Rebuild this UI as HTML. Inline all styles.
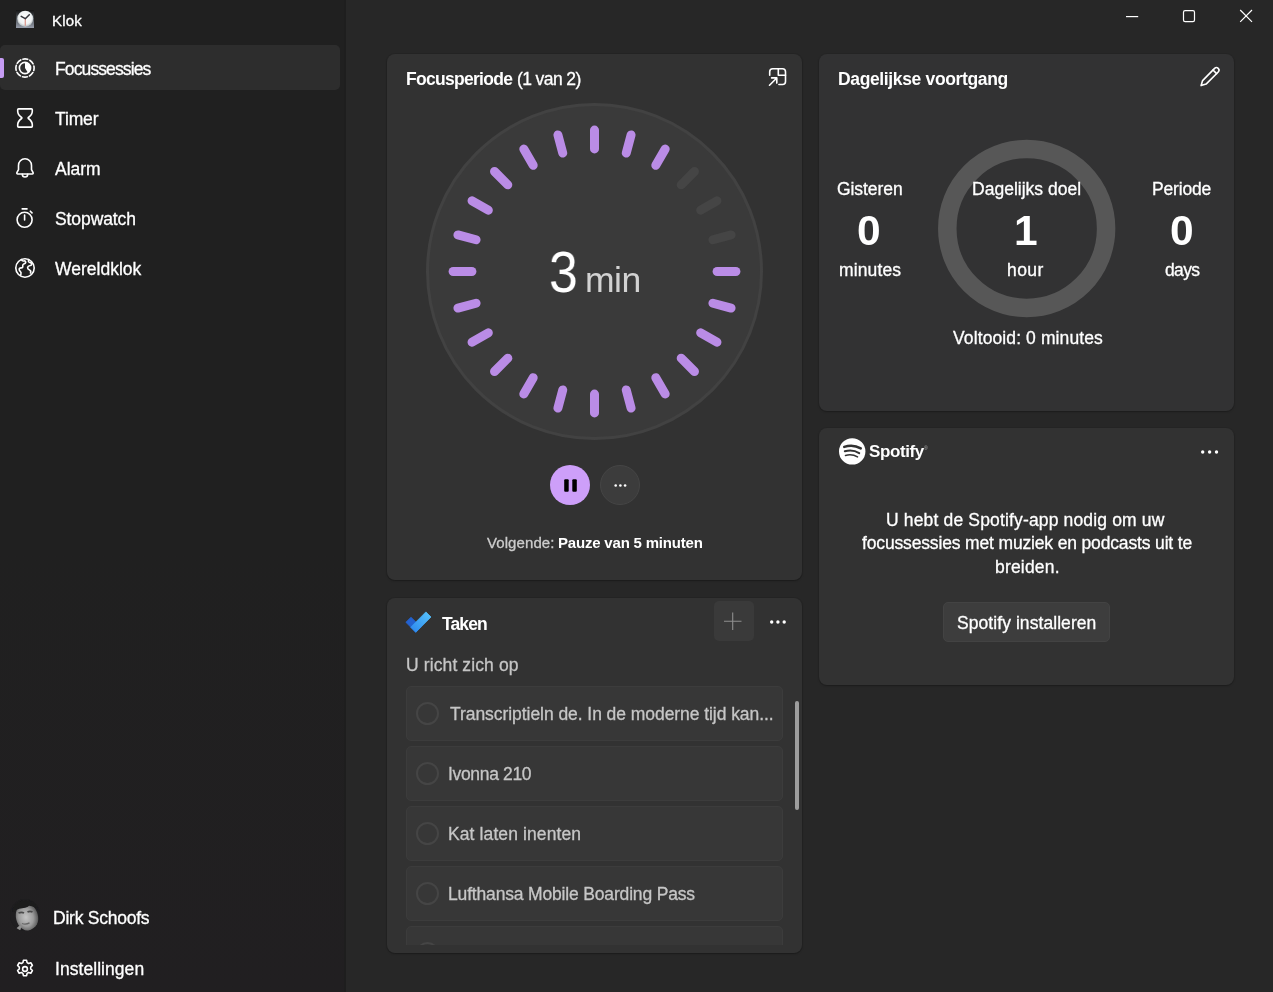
<!DOCTYPE html>
<html lang="nl">
<head>
<meta charset="utf-8">
<title>Klok</title>
<style>
*{box-sizing:border-box;margin:0;padding:0}
html,body{width:1273px;height:992px;overflow:hidden}
body{position:relative;background:#272727;font-family:"Liberation Sans",sans-serif;color:#fff}
.abs{position:absolute}
.tx{position:absolute;line-height:1;white-space:pre;will-change:transform;-webkit-text-stroke:.3px currentColor}
#side{position:absolute;left:0;top:0;width:345px;height:992px;background:linear-gradient(180deg,#202020 0%,#202020 55%,#211f21 100%)}
#edge{position:absolute;left:344px;top:0;width:2px;height:992px;background:#1e1e1e}
#main{position:absolute;left:345px;top:0;width:928px;height:992px;background:#272727}
#sel{position:absolute;left:0;top:45px;width:340px;height:45px;border-radius:5px;background:#2d2d2d}
#pill{position:absolute;left:0;top:58px;width:4px;height:20px;border-radius:0 2px 2px 0;background:#c69cf4}
.card{position:absolute;background:#323232;border-radius:8px;box-shadow:0 1px 2px rgba(0,0,0,.28),0 0 0 1px rgba(0,0,0,.06)}
#c_focus{left:387px;top:54px;width:414.5px;height:526px}
#c_tasks{left:387px;top:598px;width:414.5px;height:355px;overflow:hidden}
#c_daily{left:819px;top:54px;width:414.5px;height:357px;background:#323233}
#c_spot{left:819px;top:428px;width:414.5px;height:257px}
svg{position:absolute;overflow:visible}
.ic{fill:none;stroke:#fff;stroke-width:1.6;stroke-linecap:round;stroke-linejoin:round}
.task{position:absolute;left:406px;width:377px;height:55px;border-radius:5px;background:#373737;border:1px solid #3c3c3c}
.radio{position:absolute;left:9px;top:15px;width:23px;height:23px;border-radius:50%;border:2px solid #454545}
#list{position:absolute;left:0;top:0;width:1273px;height:945px;overflow:hidden}
#scroll{position:absolute;left:795px;top:701px;width:4px;height:109px;border-radius:2px;background:#9d9d9d}
#plus{position:absolute;left:714px;top:601px;width:40px;height:40px;border-radius:5px;background:#3a3a3a}
#spbtn{position:absolute;left:943px;top:602px;width:167px;height:40px;border-radius:5px;background:#3d3d3d;border:1px solid #434343}
#pause{position:absolute;left:550px;top:465px;width:40px;height:40px;border-radius:50%;background:#cd9ff9}
#more{position:absolute;left:600px;top:465px;width:40px;height:40px;border-radius:50%;background:#3c3c3c;border:1px solid #454545}
#avatar{position:absolute;left:10px;top:899px;width:30px;height:32px;border-radius:50%;overflow:hidden;background:#1c1c1c}
#t_klok{left:52.4px;top:13.0px;font-size:15px;font-weight:400;color:#ffffff;letter-spacing:0.200px}
#t_focus{left:54.8px;top:61.0px;font-size:17.5px;font-weight:400;color:#ffffff;letter-spacing:-0.882px}
#t_timer{left:55.3px;top:111.0px;font-size:17.5px;font-weight:400;color:#ffffff;letter-spacing:-0.150px}
#t_alarm{left:55.3px;top:161.0px;font-size:17.5px;font-weight:400;color:#ffffff;letter-spacing:-0.025px}
#t_stop{left:54.8px;top:211.0px;font-size:17.5px;font-weight:400;color:#ffffff;letter-spacing:-0.088px}
#t_world{left:55.3px;top:261.0px;font-size:17.5px;font-weight:400;color:#ffffff;letter-spacing:0.011px}
#t_user{left:52.9px;top:910.0px;font-size:17.5px;font-weight:400;color:#ffffff;letter-spacing:-0.236px}
#t_set{left:55.2px;top:961.0px;font-size:17.5px;font-weight:400;color:#ffffff;letter-spacing:0.055px}
#t_fp{left:405.8px;top:71.0px;font-size:17.5px;font-weight:700;color:#ffffff;-webkit-text-stroke:0;letter-spacing:-0.709px}
#t_fp2{left:516.9px;top:71.0px;font-size:17.5px;font-weight:400;color:#ffffff;letter-spacing:-0.600px}
#t_dv{left:837.5px;top:71.0px;font-size:17.5px;font-weight:700;color:#ffffff;-webkit-text-stroke:0;letter-spacing:-0.358px}
#t_3{left:548.9px;top:244.0px;font-size:57.5px;font-weight:400;color:#ffffff;-webkit-text-stroke:0;letter-spacing:0.000px}
#t_min{left:584.7px;top:263.0px;font-size:35.5px;font-weight:400;color:#d2d2d2;-webkit-text-stroke:0;letter-spacing:-0.450px}
#t_volg{left:487.3px;top:535.0px;font-size:15px;font-weight:400;color:#cccccc;letter-spacing:0.088px}
#t_pauze{left:557.8px;top:535.0px;font-size:15px;font-weight:700;color:#ffffff;-webkit-text-stroke:0;letter-spacing:-0.194px}
#t_taken{left:441.7px;top:616.0px;font-size:17.5px;font-weight:700;color:#ffffff;-webkit-text-stroke:0;letter-spacing:-0.900px}
#t_richt{left:405.6px;top:657.0px;font-size:17.5px;font-weight:400;color:#c5c5c5;letter-spacing:0.114px}
#t_gis{left:837.1px;top:181.0px;font-size:17.5px;font-weight:400;color:#ffffff;letter-spacing:-0.071px}
#t_0a{left:856.9px;top:210.0px;font-size:42.5px;font-weight:700;color:#ffffff;-webkit-text-stroke:0;letter-spacing:0.000px}
#t_mina{left:838.7px;top:262.0px;font-size:17.5px;font-weight:400;color:#ffffff;letter-spacing:0.117px}
#t_dd{left:971.8px;top:181.0px;font-size:17.5px;font-weight:400;color:#ffffff;letter-spacing:0.015px}
#t_1{left:1013.8px;top:210.0px;font-size:42.5px;font-weight:700;color:#ffffff;-webkit-text-stroke:0;letter-spacing:0.000px}
#t_hour{left:1007.4px;top:262.0px;font-size:17.5px;font-weight:400;color:#ffffff;letter-spacing:0.400px}
#t_per{left:1152.3px;top:181.0px;font-size:17.5px;font-weight:400;color:#ffffff;letter-spacing:-0.167px}
#t_0b{left:1169.8px;top:210.0px;font-size:42.5px;font-weight:700;color:#ffffff;-webkit-text-stroke:0;letter-spacing:0.000px}
#t_days{left:1164.6px;top:262.0px;font-size:17.5px;font-weight:400;color:#ffffff;letter-spacing:-0.633px}
#t_volt{left:952.6px;top:330.0px;font-size:17.5px;font-weight:400;color:#ffffff;letter-spacing:0.111px}
#t_spot{left:868.5px;top:443.0px;font-size:17px;font-weight:700;color:#ffffff;-webkit-text-stroke:0;letter-spacing:-0.400px}
#t_sp1{left:886.3px;top:512.0px;font-size:17.5px;font-weight:400;color:#ffffff;letter-spacing:0.156px}
#t_sp2{left:861.9px;top:535.0px;font-size:17.5px;font-weight:400;color:#ffffff;letter-spacing:-0.154px}
#t_sp3{left:994.6px;top:559.0px;font-size:17.5px;font-weight:400;color:#ffffff;letter-spacing:0.186px}
#t_spb{left:957.3px;top:615.0px;font-size:17.5px;font-weight:400;color:#ffffff;letter-spacing:0.067px}
#t_k1{left:449.8px;top:706.0px;font-size:17.5px;font-weight:400;color:#c6c6c6;letter-spacing:-0.058px}
#t_k2{left:448.3px;top:766.0px;font-size:17.5px;font-weight:400;color:#c6c6c6;letter-spacing:-0.333px}
#t_k3{left:448.1px;top:826.0px;font-size:17.5px;font-weight:400;color:#c6c6c6;letter-spacing:0.106px}
#t_k4{left:448.1px;top:886.0px;font-size:17.5px;font-weight:400;color:#c6c6c6;letter-spacing:-0.169px}
#t_3{transform:scaleX(.9);transform-origin:0 0}
</style>
</head>
<body>
<div id="side"></div>
<div id="main"></div>
<div id="edge"></div>

<!-- title bar -->
<svg id="appicon" style="left:16px;top:10px" width="18" height="18" viewBox="0 0 18 18">
  <defs>
    <linearGradient id="ag" x1="0" y1="0" x2="0" y2="1"><stop offset="0" stop-color="#141414"/><stop offset=".45" stop-color="#4a4f55"/><stop offset="1" stop-color="#979daa"/></linearGradient>
    <radialGradient id="af" cx=".5" cy=".45" r=".5"><stop offset="0" stop-color="#ffffff"/><stop offset=".8" stop-color="#eef1f2"/><stop offset="1" stop-color="#c3cacc"/></radialGradient>
  </defs>
  <rect width="18" height="18" fill="url(#ag)"/>
  <circle cx="9.200" cy="8.700" r="8" fill="url(#af)"/>
  <path d="M9.300 8.700v6.600" stroke="#dc9a90" stroke-width="1.300" stroke-linecap="round"/>
  <path d="M5.200 6.400l4.100 2.300 4-4" stroke="#33343a" stroke-width="1.500" stroke-linecap="round" stroke-linejoin="round" fill="none"/>
</svg>
<span class="tx" id="t_klok">Klok</span>
<svg style="left:1120px;top:4px" width="150" height="26" viewBox="1120 4 150 26">
  <path d="M1126 16.6h12.2" stroke="#fff" stroke-width="1.2" fill="none"/>
  <rect x="1183.5" y="10.6" width="11" height="11" rx="1.6" stroke="#fff" stroke-width="1.2" fill="none"/>
  <path d="M1240.2 10l11.8 11.8M1252 10l-11.8 11.8" stroke="#fff" stroke-width="1.2" fill="none"/>
</svg>

<!-- navigation -->
<div id="sel"></div><div id="pill"></div>
<svg style="left:15px;top:58px" width="20" height="20" viewBox="0 0 20 20">
  <circle cx="10" cy="10" r="9.1" class="ic" stroke-dasharray="4.950 2.200" stroke-linecap="butt" stroke-dashoffset="2.480"/>
  <circle cx="10" cy="10" r="5.6" class="ic"/>
  <path d="M10 10V4.4A5.6 5.6 0 0 1 12.9 14.8z" fill="#fff"/>
</svg>
<span class="tx" id="t_focus">Focussessies</span>

<svg style="left:15px;top:108px" width="20" height="20" viewBox="0 0 20 20">
  <path class="ic" d="M3.6 0.9h12.8c.5 0 .9.4.9.9v1.4c0 2.6-1.6 4.6-3.9 6.3-.4.3-.4.7 0 1 2.300 1.700 3.900 3.700 3.900 6.300v1.400c0 .5-.4.900-.9.900H3.600c-.5 0-.9-.4-.9-.9v-1.400c0-2.600 1.600-4.600 3.900-6.300.4-.3.4-.7 0-1C4.300 7.800 2.700 5.800 2.700 3.200V1.800c0-.5.4-.9.900-.9z"/>
</svg>
<span class="tx" id="t_timer">Timer</span>

<svg style="left:15px;top:158px" width="20" height="20" viewBox="0 0 20 20">
  <path class="ic" d="M10 0.8c-3.700 0-6.500 2.900-6.500 6.600v4.200L1.900 14.700c-.3.600.1 1.300.8 1.300h14.600c.7 0 1.100-.7.800-1.300l-1.600-3.100V7.400c0-3.700-2.800-6.600-6.500-6.600z"/>
  <path class="ic" d="M7.300 16.300a2.700 2.700 0 0 0 5.400 0"/>
</svg>
<span class="tx" id="t_alarm">Alarm</span>

<svg style="left:15px;top:208px" width="20" height="20" viewBox="0 0 20 20">
  <circle cx="9.600" cy="11.800" r="7.500" class="ic"/>
  <path class="ic" d="M9.600 7v5M7.200 0.900h4.800M15.300 3.200l1.700 1.700"/>
</svg>
<span class="tx" id="t_stop">Stopwatch</span>

<svg style="left:15px;top:258px" width="20" height="20" viewBox="0 0 20 20">
  <circle cx="10" cy="10" r="9.2" class="ic"/>
  <path class="ic" d="M6.300 1.700c.6 1.100 1.800 1.500 2.700 1.200 1.300-.4 2.100.9 1.500 2-.5.900-2 .9-2.600 1.900-.5.900.3 1.800-.4 2.600-.7.800-2.100.2-2.900 1-.9.900-.2 2.100.7 2.900 1 .8.900 2.200.5 3.500"/>
  <path class="ic" d="M13.800 1.700c-.6.700-.5 1.800.2 2.400.9.700 2.300.4 2.800 1.500.4 1-.6 1.700-1.600 1.900-1.200.2-2.400.8-2.600 2-.2 1.300.9 2 1.900 2.400 1.200.5 1.500 1.800 1 3.100"/>
</svg>
<span class="tx" id="t_world">Wereldklok</span>

<div id="avatar">
  <svg style="left:0;top:0" width="30" height="32" viewBox="0 0 30 32">
    <defs>
      <radialGradient id="fg" cx="0.45" cy="0.5" r="0.6"><stop offset="0" stop-color="#c4c4c4"/><stop offset="0.55" stop-color="#9c9c9c"/><stop offset="1" stop-color="#474747"/></radialGradient>
      <filter id="bl" x="-20%" y="-20%" width="140%" height="140%"><feGaussianBlur stdDeviation="0.700"/></filter>
    </defs>
    <rect width="30" height="32" fill="#1f1e20"/>
    <g filter="url(#bl)">
      <ellipse cx="17" cy="18" rx="11" ry="14" fill="url(#fg)" transform="rotate(-14 17 18)"/>
      <path d="M2 14C2 5 10 0 18 1.500c6 1 10 5 11 10-3-3-6-4.500-10-4.800-1.500 1.500-3 2-5.500 2.200C10 9.300 5 10.500 2 14z" fill="#1b1b1c"/>
      <path d="M8.500 14c2-.8 4-.8 5.500 0M17.500 13c1.600-.9 3.400-.9 5 0" stroke="#4a4a4a" stroke-width="1.800" fill="none"/>
      <path d="M12 24.500c2.500.9 5 .7 7.500-.6" stroke="#666" stroke-width="1.300" fill="none"/>
      <path d="M4 32c3-4 6-6 8-6l-2 6zM22 32l8-9v9z" fill="#8f8f8f"/>
    </g>
  </svg>
</div>
<span class="tx" id="t_user">Dirk Schoofs</span>

<svg style="left:15px;top:959px" width="20" height="20" viewBox="0 0 20 20">
  <circle cx="10" cy="10" r="2.400" class="ic" stroke-width="1.4"/>
  <path class="ic" stroke-width="1.4" d="M8.400 1.300h3.200l.5 2.300 1.500.9 2.200-.8 1.600 2.800-1.700 1.600v1.800l1.700 1.600-1.600 2.800-2.200-.8-1.500.9-.5 2.300H8.400l-.5-2.300-1.500-.9-2.200.8-1.600-2.800 1.700-1.600V8.100L2.600 6.500l1.600-2.800 2.200.8 1.500-.9z"/>
</svg>
<span class="tx" id="t_set">Instellingen</span>

<!-- focus card -->
<div class="card" id="c_focus"></div>
<span class="tx" id="t_fp">Focusperiode</span><span class="tx" id="t_fp2">(1 van 2)</span>
<svg style="left:768px;top:67px" width="20" height="20" viewBox="0 0 20 20">
  <path class="ic" stroke-width="1.4" d="M1.700 8.300V4.700c0-1.700 1.300-3 3-3h9.800c1.700 0 3 1.300 3 3v9.800c0 1.700-1.300 3-3 3h-3.600"/>
  <path class="ic" stroke-width="1.400" d="M10.300 1.700v6.600h7.200"/>
  <path class="ic" stroke-width="1.400" d="M1.500 18.200l7-7M3.600 10.900h5.200v5.200"/>
</svg>
<svg id="dial" style="left:424px;top:101px" width="341" height="341" viewBox="-170.500 -170.500 341 341">
  <circle r="167" fill="#3a3a3a" stroke="#424242" stroke-width="3"/>
  <g id="ticks" stroke-width="9" stroke-linecap="round" stroke="#ba8ce6">
    <line x1="0.00" y1="-122.60" x2="0.00" y2="-141.40"/>
    <line x1="31.73" y1="-118.42" x2="36.60" y2="-136.58"/>
    <line x1="61.30" y1="-106.17" x2="70.70" y2="-122.46"/>
    <line x1="86.69" y1="-86.69" x2="99.98" y2="-99.98" stroke="#454545"/>
    <line x1="106.17" y1="-61.30" x2="122.46" y2="-70.70" stroke="#454545"/>
    <line x1="118.42" y1="-31.73" x2="136.58" y2="-36.60" stroke="#454545"/>
    <line x1="122.60" y1="-0.00" x2="141.40" y2="-0.00"/>
    <line x1="118.42" y1="31.73" x2="136.58" y2="36.60"/>
    <line x1="106.17" y1="61.30" x2="122.46" y2="70.70"/>
    <line x1="86.69" y1="86.69" x2="99.98" y2="99.98"/>
    <line x1="61.30" y1="106.17" x2="70.70" y2="122.46"/>
    <line x1="31.73" y1="118.42" x2="36.60" y2="136.58"/>
    <line x1="0.00" y1="122.60" x2="0.00" y2="141.40"/>
    <line x1="-31.73" y1="118.42" x2="-36.60" y2="136.58"/>
    <line x1="-61.30" y1="106.17" x2="-70.70" y2="122.46"/>
    <line x1="-86.69" y1="86.69" x2="-99.98" y2="99.98"/>
    <line x1="-106.17" y1="61.30" x2="-122.46" y2="70.70"/>
    <line x1="-118.42" y1="31.73" x2="-136.58" y2="36.60"/>
    <line x1="-122.60" y1="0.00" x2="-141.40" y2="0.00"/>
    <line x1="-118.42" y1="-31.73" x2="-136.58" y2="-36.60"/>
    <line x1="-106.17" y1="-61.30" x2="-122.46" y2="-70.70"/>
    <line x1="-86.69" y1="-86.69" x2="-99.98" y2="-99.98"/>
    <line x1="-61.30" y1="-106.17" x2="-70.70" y2="-122.46"/>
    <line x1="-31.73" y1="-118.42" x2="-36.60" y2="-136.58"/>
  </g>
</svg>
<span class="tx" id="t_3">3</span><span class="tx" id="t_min">min</span>
<div id="pause"></div>
<svg style="left:550px;top:465px" width="40" height="40" viewBox="0 0 40 40"><rect x="14.200" y="14.300" width="4.500" height="12.400" rx="1" fill="#000"/><rect x="22.300" y="14.300" width="4.500" height="12.400" rx="1" fill="#000"/></svg>
<div id="more"></div>
<svg style="left:600px;top:465px" width="40" height="40" viewBox="0 0 40 40"><circle cx="15.700" cy="20.500" r="1.300" fill="#fff"/><circle cx="20.400" cy="20.500" r="1.300" fill="#fff"/><circle cx="25.100" cy="20.500" r="1.300" fill="#fff"/></svg>
<span class="tx" id="t_volg">Volgende:</span><span class="tx" id="t_pauze">Pauze van 5 minuten</span>

<!-- tasks card -->
<div class="card" id="c_tasks"></div>
<svg style="left:405px;top:611px" width="27" height="22" viewBox="0 0 27 22">
  <defs><linearGradient id="tg" x1="0" y1="1" x2="1" y2="0"><stop offset="0" stop-color="#2a86ee"/><stop offset="1" stop-color="#58c4fa"/></linearGradient></defs>
  <path d="M0.900 11.300L6 6.200l9.900 9.900-5.100 5.100z" fill="#2362d0" stroke="#2362d0" stroke-width=".8" stroke-linejoin="round"/>
  <path d="M5.700 16.200L20.900 0.900l5.100 5.100-15.200 15.300z" fill="url(#tg)" stroke="url(#tg)" stroke-width=".8" stroke-linejoin="round"/>
</svg>
<span class="tx" id="t_taken">Taken</span>
<div id="plus"></div>
<svg style="left:714px;top:601px" width="40" height="40" viewBox="0 0 40 40"><path d="M10 20.300h17.500M18.700 11.600v17.500" stroke="#8e8e8e" stroke-width="1.100" fill="none"/></svg>
<svg style="left:765px;top:612px" width="26" height="20" viewBox="0 0 26 20"><circle cx="6.700" cy="10" r="1.700" fill="#fff"/><circle cx="12.900" cy="10" r="1.700" fill="#fff"/><circle cx="19.200" cy="10" r="1.700" fill="#fff"/></svg>
<span class="tx" id="t_richt">U richt zich op</span>
<div id="list">
  <div class="task" style="top:686px"><div class="radio"></div></div>
  <div class="task" style="top:746px"><div class="radio"></div></div>
  <div class="task" style="top:806px"><div class="radio"></div></div>
  <div class="task" style="top:866px"><div class="radio"></div></div>
  <div class="task" style="top:926px"><div class="radio"></div></div>
  <span class="tx" id="t_k1">Transcriptieln de. In de moderne tijd kan...</span>
  <span class="tx" id="t_k2">Ivonna 210</span>
  <span class="tx" id="t_k3">Kat laten inenten</span>
  <span class="tx" id="t_k4">Lufthansa Mobile Boarding Pass</span>
</div>
<div id="scroll"></div>

<!-- daily progress card -->
<div class="card" id="c_daily"></div>
<span class="tx" id="t_dv">Dagelijkse voortgang</span>
<svg style="left:1199px;top:66px" width="22" height="22" viewBox="0 0 22 22">
  <path class="ic" stroke-width="1.400" d="M15.600 2.400a2.500 2.500 0 0 1 3.600 3.600L7.100 18.100l-5 1.500 1.500-5z"/>
  <path class="ic" stroke-width="1.400" d="M14 4l3.600 3.600"/>
</svg>
<svg style="left:936px;top:138px" width="182" height="182" viewBox="-91 -91 182 182"><circle cx="-.300" cy="-.500" r="79.400" fill="none" stroke="#575757" stroke-width="18.500"/></svg>
<span class="tx" id="t_gis">Gisteren</span><span class="tx" id="t_0a">0</span><span class="tx" id="t_mina">minutes</span>
<span class="tx" id="t_dd">Dagelijks doel</span><span class="tx" id="t_1">1</span><span class="tx" id="t_hour">hour</span>
<span class="tx" id="t_per">Periode</span><span class="tx" id="t_0b">0</span><span class="tx" id="t_days">days</span>
<span class="tx" id="t_volt">Voltooid: 0 minutes</span>

<!-- spotify card -->
<div class="card" id="c_spot"></div>
<svg style="left:839px;top:438px" width="27" height="27" viewBox="0 0 27 27">
  <circle cx="13.200" cy="13.400" r="13.200" fill="#fff"/>
  <path d="M5.200 8.900C10.500 7.100 17 7.600 21.800 10.400" stroke="#323232" stroke-width="2.400" stroke-linecap="round" fill="none"/>
  <path d="M5.800 13.300C10.500 11.900 16 12.500 20.200 15.100" stroke="#323232" stroke-width="2" stroke-linecap="round" fill="none"/>
  <path d="M6.500 17.400C10.500 16.300 15 16.800 18.500 18.900" stroke="#323232" stroke-width="1.600" stroke-linecap="round" fill="none"/>
</svg>
<span class="tx" id="t_spot">Spotify</span><span class="tx" style="left:924px;top:446px;font-size:5px;color:#b0b0b0;-webkit-text-stroke:0">®</span>
<svg style="left:1196px;top:442px" width="28" height="20" viewBox="0 0 28 20"><circle cx="6.700" cy="10" r="1.700" fill="#fff"/><circle cx="13.600" cy="10" r="1.700" fill="#fff"/><circle cx="20.500" cy="10" r="1.700" fill="#fff"/></svg>
<span class="tx" id="t_sp1">U hebt de Spotify-app nodig om uw</span>
<span class="tx" id="t_sp2">focussessies met muziek en podcasts uit te</span>
<span class="tx" id="t_sp3">breiden.</span>
<div id="spbtn"></div>
<span class="tx" id="t_spb">Spotify installeren</span>
</body>
</html>
